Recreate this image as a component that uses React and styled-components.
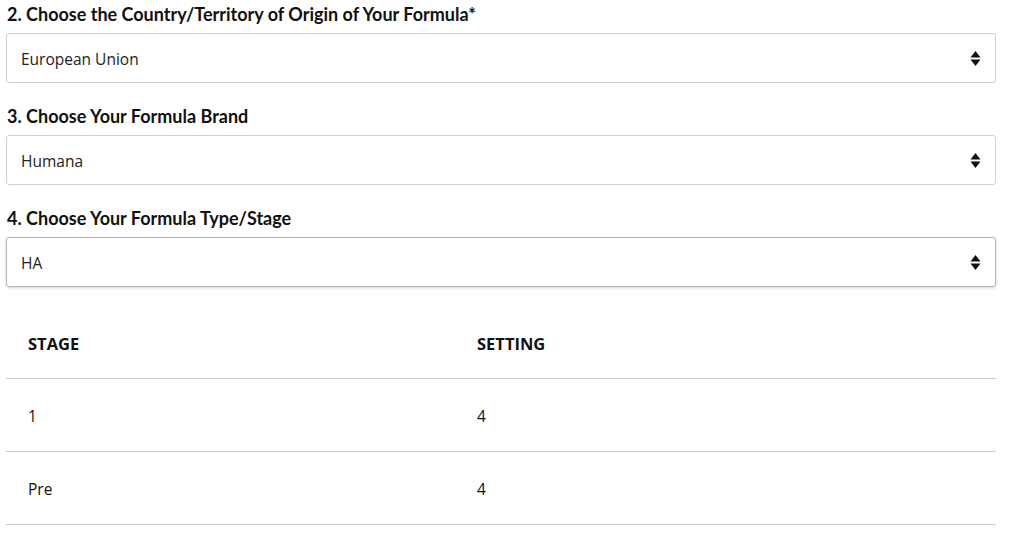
import React from "react";
import styled, { createGlobalStyle } from "styled-components";

const Global = createGlobalStyle`
  html, body { margin: 0; padding: 0; background: #fff; }
  body { font-family: "Open Sans", "Liberation Sans", sans-serif; color: #111; }
`;

const Page = styled.div`
  width: 990px;
  padding: 3px 0 0 6px;
  display: flex;
  flex-direction: column;
`;

const Field = styled.div`
  display: flex;
  flex-direction: column;
  margin-bottom: 22px;
`;

const Label = styled.label`
  font-family: "Lato", "Liberation Sans", sans-serif;
  font-weight: 700;
  font-size: 18px;
  line-height: 23px;
  color: #111;
  padding-left: 1px;
  margin-bottom: 7px;
`;

const SelectBox = styled.div`
  box-sizing: border-box;
  height: 50px;
  border: 1px solid ${(p) => (p.$focused ? "#b4b4b4" : "#cfcfcf")};
  border-radius: 3px;
  box-shadow: ${(p) => (p.$focused ? "0 1px 3px rgba(0,0,0,0.18)" : "none")};
  display: flex;
  align-items: center;
  padding: 0 14px;
  font-size: 15.5px;
  color: #222;
`;

const Value = styled.span`
  flex: 1;
  padding-top: 1px;
`;

const Arrows = styled.svg`
  width: 11px;
  height: 15px;
  margin-top: 1px;
`;

const Table = styled.div`
  display: flex;
  flex-direction: column;
  margin-top: -1px;
`;

const Row = styled.div`
  display: grid;
  grid-template-columns: 449px 1fr;
  height: ${(p) => (p.$head ? 70 : 72)}px;
  align-items: center;
  border-bottom: 1px solid #c8c8c8;
`;

const Cell = styled.div`
  padding-left: 22px;
  font-family: "Open Sans", "Liberation Sans", sans-serif;
  font-size: ${(p) => (p.$head ? "16.5px" : "15.5px")};
  font-weight: ${(p) => (p.$head ? 700 : 400)};
  color: #111;
  padding-top: ${(p) => (p.$head ? 0 : 2)}px;
`;

const ArrowIcon = () => (
  <Arrows viewBox="0 0 11 15">
    <path d="M5.5 0 L10.5 6.5 L0.5 6.5 Z" fill="#111" />
    <path d="M0.5 8.5 L10.5 8.5 L5.5 15 Z" fill="#111" />
  </Arrows>
);

const Select = ({ label, value, focused }) => (
  <Field>
    <Label>{label}</Label>
    <SelectBox $focused={focused}>
      <Value>{value}</Value>
      <ArrowIcon />
    </SelectBox>
  </Field>
);

export default function App() {
  return (
    <>
      <Global />
      <Page>
        <Select label="2. Choose the Country/Territory of Origin of Your Formula*" value="European Union" />
        <Select label="3. Choose Your Formula Brand" value="Humana" />
        <Select label="4. Choose Your Formula Type/Stage" value="HA" focused />
        <Table>
          <Row $head>
            <Cell $head>STAGE</Cell>
            <Cell $head>SETTING</Cell>
          </Row>
          <Row>
            <Cell>1</Cell>
            <Cell>4</Cell>
          </Row>
          <Row>
            <Cell>Pre</Cell>
            <Cell>4</Cell>
          </Row>
        </Table>
      </Page>
    </>
  );
}
